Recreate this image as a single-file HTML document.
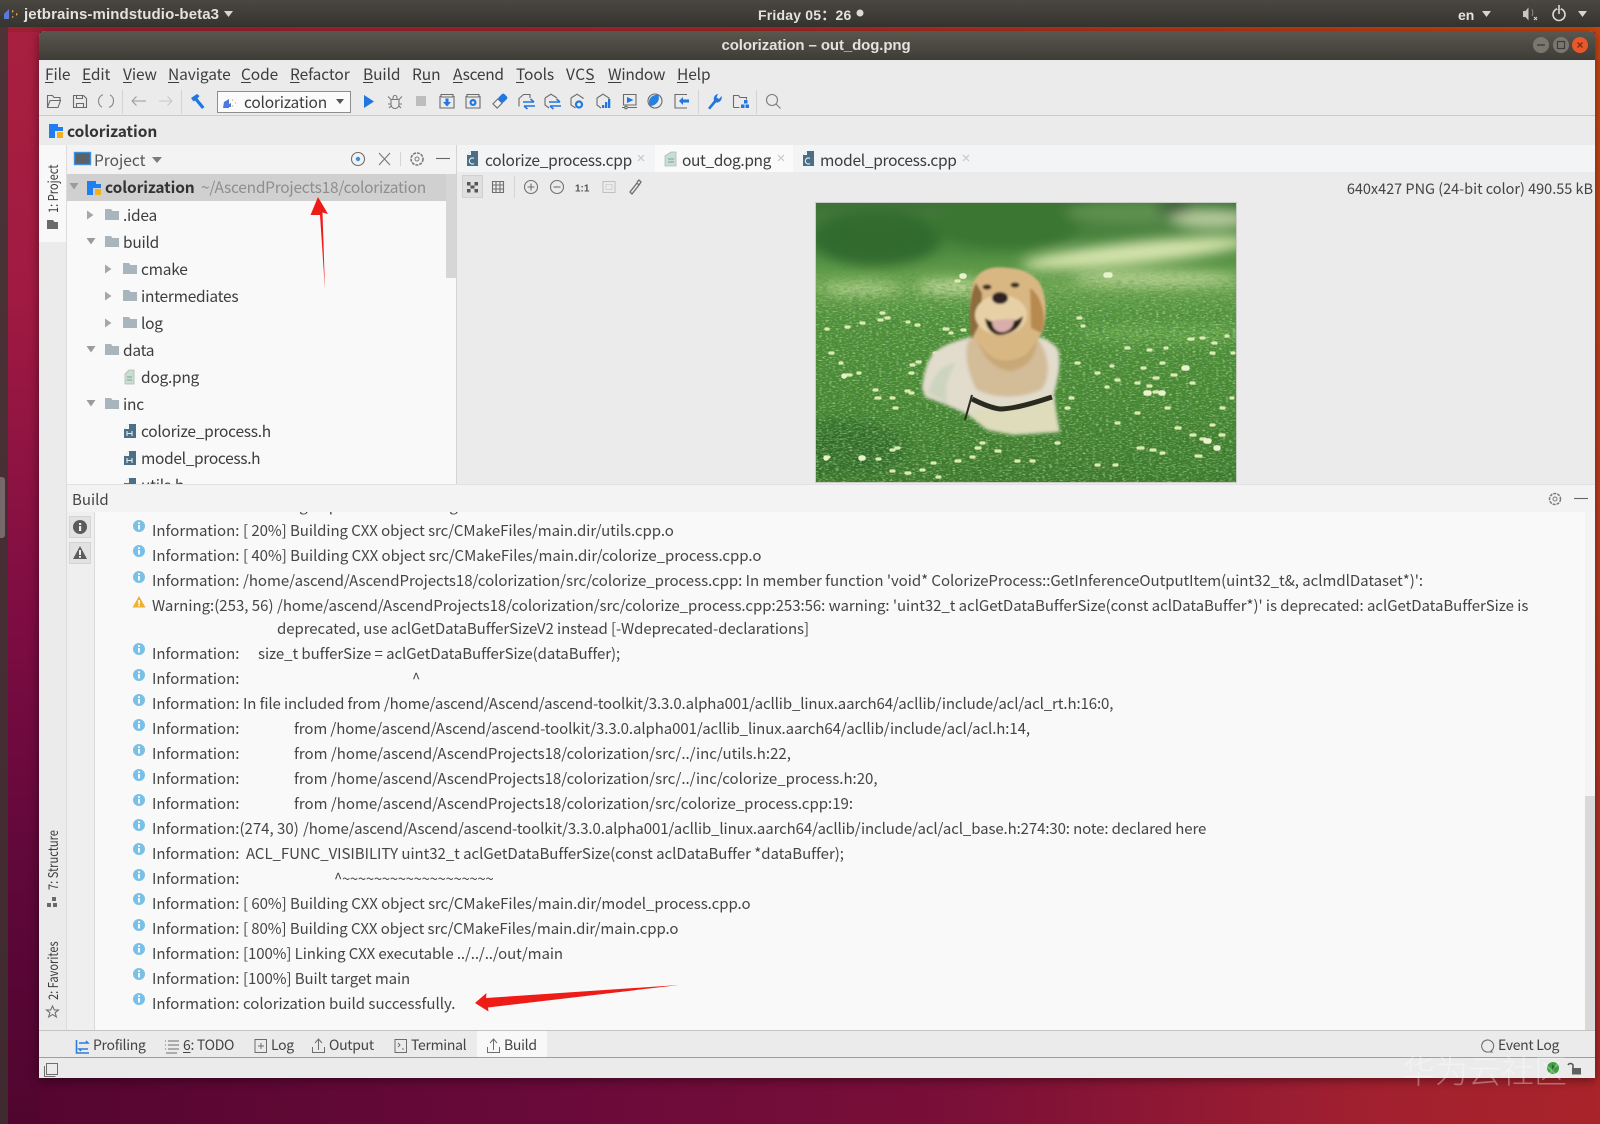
<!DOCTYPE html>
<html lang="en">
<head>
<meta charset="utf-8">
<title>colorization - out_dog.png</title>
<style>
html,body{margin:0;padding:0;width:1600px;height:1124px;overflow:hidden;background:#5a0833}
body{position:relative;font-family:"Noto Sans CJK SC","Liberation Sans",sans-serif;color:#3f3f3f}
.b{position:absolute}
.t{position:absolute;white-space:pre;line-height:20px;height:20px;font-size:15px;color:#3d3d3d}
.u{text-decoration:underline;text-underline-offset:2px;text-decoration-thickness:1px}
.m{font-size:15.5px;top:64px;letter-spacing:-.1px}
.p{font-family:"Liberation Sans",sans-serif;font-weight:700;font-size:15px;color:#e4e2dd;top:5px}
.tr{font-size:15.5px;letter-spacing:-.26px}
.i{font-size:15px;color:#454545}
.v{position:absolute;white-space:pre;transform-origin:0 0;font-size:13.5px;line-height:16px;color:#3d3d3d}
.tb{font-size:14px;color:#444;top:1035px;letter-spacing:-.3px}
svg{position:absolute;left:0;top:0;overflow:visible}
</style>
</head>
<body>
<!-- wallpaper -->
<div class="b" style="left:0;top:0;width:1600px;height:1124px;background:linear-gradient(90deg,#53052f 0%,#6a0a3a 35%,#7a0f38 60%,#a12030 85%,#a9242a 100%)"></div>
<div class="b" style="left:0;top:27px;width:40px;height:1097px;background:linear-gradient(180deg,#a8203f 0%,#a01a42 25%,#7c0c42 55%,#5c0738 80%,#50052e 100%)"></div>
<div class="b" style="left:0;top:27px;width:1600px;height:5px;background:linear-gradient(90deg,#9c1f33 0%,#a5262a 45%,#bc3a14 80%,#c8440f 100%)"></div>
<div class="b" style="left:1595px;top:27px;width:5px;height:1097px;background:linear-gradient(180deg,#c8440f 0%,#bb3a1c 50%,#a9242a 100%)"></div>
<div class="b" style="left:0;top:27px;width:8px;height:1097px;background:linear-gradient(180deg,#4d3338,#3f2a30)"></div>
<div class="b" style="left:0;top:477px;width:5px;height:61px;background:#76686b;border-radius:0 3px 3px 0"></div>
<!-- panel -->
<div class="b" style="left:0;top:0;width:1600px;height:27px;background:linear-gradient(180deg,#4a4741,#36342f)"></div>
<div class="t p" style="left:24px;letter-spacing:.1px">jetbrains-mindstudio-beta3</div>
<div class="t p" style="left:758px;font-size:14px;letter-spacing:.2px">Friday 05：26</div>
<div class="t p" style="left:1458px;font-size:14px">en</div>
<!-- window -->
<div class="b" style="left:39px;top:31px;width:1556px;height:1047px;background:#ebebeb;border-radius:6px 6px 0 0;box-shadow:0 2px 10px rgba(0,0,0,.45)"></div>
<div class="b" style="left:39px;top:31px;width:1556px;height:29px;border-radius:6px 6px 0 0;background:linear-gradient(180deg,#5a574f,#3e3c36)"></div>
<div class="t p" style="left:0;width:1632px;text-align:center;top:36px;letter-spacing:-.1px">colorization – out_dog.png</div>
<!-- menu -->
<div class="b" style="left:39px;top:115px;width:1556px;height:1px;background:#cacaca"></div>
<div class="t m" style="left:45px"><span class="u">F</span>ile</div>
<div class="t m" style="left:82px"><span class="u">E</span>dit</div>
<div class="t m" style="left:123px"><span class="u">V</span>iew</div>
<div class="t m" style="left:168px"><span class="u">N</span>avigate</div>
<div class="t m" style="left:241px"><span class="u">C</span>ode</div>
<div class="t m" style="left:290px"><span class="u">R</span>efactor</div>
<div class="t m" style="left:363px"><span class="u">B</span>uild</div>
<div class="t m" style="left:412px">R<span class="u">u</span>n</div>
<div class="t m" style="left:453px;letter-spacing:-.25px"><span class="u">A</span>scend</div>
<div class="t m" style="left:516px"><span class="u">T</span>ools</div>
<div class="t m" style="left:566px;letter-spacing:.5px">VC<span class="u">S</span></div>
<div class="t m" style="left:608px;letter-spacing:-.25px"><span class="u">W</span>indow</div>
<div class="t m" style="left:677px"><span class="u">H</span>elp</div>
<!-- combo -->
<div class="b" style="left:217px;top:91px;width:132px;height:20px;background:#fbfbfb;border:1px solid #8e8e8e"></div>
<div class="t" style="left:244px;top:92px;font-size:15.5px;letter-spacing:-.2px">colorization</div>
<!-- nav -->
<div class="t" style="left:67px;top:121px;font-size:15.5px;font-weight:700;color:#333;letter-spacing:-.05px">colorization</div>
<!-- sidebar -->
<div class="b" style="left:39px;top:145px;width:27px;height:97px;background:#f8f8f8"></div>
<div class="b" style="left:66px;top:145px;width:1px;height:885px;background:#dcdcdc"></div>
<div class="v" style="left:44px;top:213px;transform:rotate(-90deg) scaleX(.82)">1: Project</div>
<div class="v" style="left:44px;top:890px;transform:rotate(-90deg) scaleX(.82)">7: Structure</div>
<div class="v" style="left:44px;top:1000px;transform:rotate(-90deg) scaleX(.82)">2: Favorites</div>
<!-- project pane -->
<div class="b" style="left:67px;top:145px;width:389px;height:29px;background:#f3f3f3"></div>
<div class="t" style="left:94px;top:150px;font-size:15.5px;color:#555">Project</div>
<div class="b" style="left:67px;top:174px;width:389px;height:310px;background:#f9f9f9;overflow:hidden" id="tree">
  <div class="b" style="left:0;top:0;width:389px;height:27px;background:#d0d0d0"></div>
  <div class="t tr" style="left:38px;top:3px;font-weight:700;color:#333;letter-spacing:-.1px">colorization</div>
  <div class="t tr" style="left:134px;top:3px;color:#8e8e8e">~/AscendProjects18/colorization</div>
  <div class="t tr" style="left:56px;top:31px">.idea</div>
  <div class="t tr" style="left:56px;top:58px">build</div>
  <div class="t tr" style="left:74px;top:85px">cmake</div>
  <div class="t tr" style="left:74px;top:112px">intermediates</div>
  <div class="t tr" style="left:74px;top:139px">log</div>
  <div class="t tr" style="left:56px;top:166px">data</div>
  <div class="t tr" style="left:74px;top:193px">dog.png</div>
  <div class="t tr" style="left:56px;top:220px">inc</div>
  <div class="t tr" style="left:74px;top:247px">colorize_process.h</div>
  <div class="t tr" style="left:74px;top:274px;letter-spacing:-.33px">model_process.h</div>
  <div class="t tr" style="left:74px;top:301px">utils.h</div>
  <div class="b" style="left:379px;top:0;width:10px;height:104px;background:#d6d6d6"></div>
</div>
<div class="b" style="left:456px;top:145px;width:1px;height:339px;background:#d4d4d4"></div>
<!-- tabs -->
<div class="b" style="left:457px;top:145px;width:1138px;height:27px;background:#f2f4f5"></div>
<div class="b" style="left:655px;top:145px;width:138px;height:27px;background:#fafafa"></div>
<div class="t tr" style="left:485px;top:150px">colorize_process.cpp</div>
<div class="t tr" style="left:682px;top:150px;letter-spacing:-.38px">out_dog.png</div>
<div class="t tr" style="left:820px;top:150px;letter-spacing:-.3px">model_process.cpp</div>
<div class="t" style="right:7px;top:179px;font-size:14.5px;color:#444;letter-spacing:-.02px">640x427 PNG (24-bit color) 490.55 kB</div>
<!-- build pane -->
<div class="b" style="left:67px;top:484px;width:1528px;height:28px;background:#f3f3f3;border-top:1px solid #e2e2e2;box-sizing:border-box"></div>
<div class="t" style="left:72px;top:490px;font-size:15px;color:#444">Build</div>
<div class="b" style="left:67px;top:512px;width:28px;height:518px;background:#efefef;border-right:1px solid #dadada;box-sizing:border-box"></div>
<div class="b" style="left:95px;top:512px;width:1490px;height:518px;background:#f9f9f9;overflow:hidden" id="log">
  <div class="t i" style="left:57px;top:-16px">Information: Scanning dependencies of target main</div>
</div>
<div class="b" style="left:1585px;top:512px;width:10px;height:518px;background:#f4f4f4"></div>
<div class="b" style="left:1585px;top:796px;width:10px;height:234px;background:#d9d9d9"></div>

<div class="t i" style="left:152px;top:521px">Information:</div><div class="t i" style="left:243px;top:521px;letter-spacing:-.05px">[ 20%] Building CXX object src/CMakeFiles/main.dir/utils.cpp.o</div>
<div class="t i" style="left:152px;top:546px">Information:</div><div class="t i" style="left:243px;top:546px;letter-spacing:-.03px">[ 40%] Building CXX object src/CMakeFiles/main.dir/colorize_process.cpp.o</div>
<div class="t i" style="left:152px;top:571px">Information:</div><div class="t i" style="left:243px;top:571px;letter-spacing:-.03px">/home/ascend/AscendProjects18/colorization/src/colorize_process.cpp: In member function 'void* ColorizeProcess::GetInferenceOutputItem(uint32_t&amp;, aclmdlDataset*)':</div>
<div class="t i" style="left:152px;top:596px">Warning:(253, 56)</div><div class="t i" style="left:277px;top:596px;letter-spacing:-.04px">/home/ascend/AscendProjects18/colorization/src/colorize_process.cpp:253:56: warning: 'uint32_t aclGetDataBufferSize(const aclDataBuffer*)' is deprecated: aclGetDataBufferSize is</div>
<div class="t i" style="left:277px;top:619px;letter-spacing:-.07px">deprecated, use aclGetDataBufferSizeV2 instead [-Wdeprecated-declarations]</div>
<div class="t i" style="left:152px;top:644px">Information:</div><div class="t i" style="left:258px;top:644px;letter-spacing:-.06px">size_t bufferSize = aclGetDataBufferSize(dataBuffer);</div>
<div class="t i" style="left:152px;top:669px">Information:</div><div class="t i" style="left:412px;top:669px">^</div>
<div class="t i" style="left:152px;top:694px">Information:</div><div class="t i" style="left:243px;top:694px;letter-spacing:-.11px">In file included from /home/ascend/Ascend/ascend-toolkit/3.3.0.alpha001/acllib_linux.aarch64/acllib/include/acl/acl_rt.h:16:0,</div>
<div class="t i" style="left:152px;top:719px">Information:</div><div class="t i" style="left:294px;top:719px;letter-spacing:-.09px">from /home/ascend/Ascend/ascend-toolkit/3.3.0.alpha001/acllib_linux.aarch64/acllib/include/acl/acl.h:14,</div>
<div class="t i" style="left:152px;top:744px">Information:</div><div class="t i" style="left:294px;top:744px">from /home/ascend/AscendProjects18/colorization/src/../inc/utils.h:22,</div>
<div class="t i" style="left:152px;top:769px">Information:</div><div class="t i" style="left:294px;top:769px">from /home/ascend/AscendProjects18/colorization/src/../inc/colorize_process.h:20,</div>
<div class="t i" style="left:152px;top:794px">Information:</div><div class="t i" style="left:294px;top:794px">from /home/ascend/AscendProjects18/colorization/src/colorize_process.cpp:19:</div>
<div class="t i" style="left:152px;top:819px">Information:(274, 30)</div><div class="t i" style="left:303px;top:819px;letter-spacing:-.11px">/home/ascend/Ascend/ascend-toolkit/3.3.0.alpha001/acllib_linux.aarch64/acllib/include/acl/acl_base.h:274:30: note: declared here</div>
<div class="t i" style="left:152px;top:844px">Information:</div><div class="t i" style="left:246px;top:844px;letter-spacing:-.04px">ACL_FUNC_VISIBILITY uint32_t aclGetDataBufferSize(const aclDataBuffer *dataBuffer);</div>
<div class="t i" style="left:152px;top:869px">Information:</div><div class="t i" style="left:334px;top:869px;letter-spacing:-.36px">^~~~~~~~~~~~~~~~~~~~</div>
<div class="t i" style="left:152px;top:894px">Information:</div><div class="t i" style="left:243px;top:894px;letter-spacing:-.05px">[ 60%] Building CXX object src/CMakeFiles/main.dir/model_process.cpp.o</div>
<div class="t i" style="left:152px;top:919px">Information:</div><div class="t i" style="left:243px;top:919px;letter-spacing:-.07px">[ 80%] Building CXX object src/CMakeFiles/main.dir/main.cpp.o</div>
<div class="t i" style="left:152px;top:944px">Information:</div><div class="t i" style="left:243px;top:944px;letter-spacing:-.09px">[100%] Linking CXX executable ../../../out/main</div>
<div class="t i" style="left:152px;top:969px">Information:</div><div class="t i" style="left:243px;top:969px;letter-spacing:-.08px">[100%] Built target main</div>
<div class="t i" style="left:152px;top:994px">Information:</div><div class="t i" style="left:243px;top:994px">colorization build successfully.</div>

<!-- bottom bars -->
<div class="b" style="left:39px;top:1030px;width:1556px;height:1px;background:#c4c4c4"></div>
<div class="b" style="left:39px;top:1057px;width:1556px;height:1px;background:#9f9f9f"></div>
<div class="b" style="left:477px;top:1031px;width:70px;height:26px;background:#f8f8f8"></div>
<div class="t tb" style="left:93px">Profiling</div>
<div class="t tb" style="left:183px"><span class="u">6</span>: TODO</div>
<div class="t tb" style="left:271px">Log</div>
<div class="t tb" style="left:329px">Output</div>
<div class="t tb" style="left:411px">Terminal</div>
<div class="t tb" style="left:504px">Build</div>
<div class="t tb" style="left:1498px">Event Log</div>

<!-- image -->
<div class="b" style="left:815px;top:202px;width:422px;height:281px;background:#c9cdc5"></div>
<svg style="left:816px;top:203px;overflow:hidden" width="420" height="279" viewBox="0 0 420 279">
  <defs>
    <linearGradient id="gr" x1="0" y1="0" x2="0" y2="1">
      <stop offset="0" stop-color="#3f7238"/><stop offset=".17" stop-color="#4d8a40"/>
      <stop offset=".3" stop-color="#70a852"/><stop offset=".42" stop-color="#4f9238"/>
      <stop offset=".7" stop-color="#44882f"/><stop offset="1" stop-color="#397528"/>
    </linearGradient>
    <filter id="b8" x="-30%" y="-30%" width="160%" height="160%"><feGaussianBlur stdDeviation="6"/></filter>
    <filter id="b2" x="-20%" y="-20%" width="140%" height="140%"><feGaussianBlur stdDeviation="1.600"/></filter>
    <filter id="b1" x="-20%" y="-20%" width="140%" height="140%"><feGaussianBlur stdDeviation="1"/></filter>
    <filter id="n" x="0" y="0" width="100%" height="100%"><feTurbulence type="fractalNoise" baseFrequency=".16 .5" numOctaves="3" seed="4"/><feColorMatrix values="0 0 0 0 .08  0 0 0 0 .24  0 0 0 0 .06  2.400 0 0 0 -.95"/></filter>
    <filter id="n2" x="0" y="0" width="100%" height="100%"><feTurbulence type="fractalNoise" baseFrequency=".3 .7" numOctaves="2" seed="11"/><feColorMatrix values="0 0 0 0 .6  0 0 0 0 .85  0 0 0 0 .42  0 1.800 0 0 -.9"/></filter>
    <linearGradient id="fd" x1="0" y1="0" x2="0" y2="1"><stop offset=".22" stop-color="#000"/><stop offset=".4" stop-color="#fff"/></linearGradient>
    <mask id="mk"><rect width="420" height="279" fill="url(#fd)"/></mask>
  </defs>
  <rect width="420" height="279" fill="url(#gr)"/>
  <g filter="url(#b8)">
    <ellipse cx="60" cy="35" rx="65" ry="28" fill="#336a2e"/>
    <ellipse cx="190" cy="22" rx="75" ry="24" fill="#3a7632"/>
    <ellipse cx="320" cy="10" rx="70" ry="12" fill="#5d9050"/>
    <ellipse cx="395" cy="16" rx="40" ry="10" fill="#b4c99a"/>
    <ellipse cx="358" cy="6" rx="18" ry="5" fill="#3b4e3a"/>
    <ellipse cx="320" cy="50" rx="115" ry="11" fill="#d5e4ac" transform="rotate(-6 320 50)"/>
    <ellipse cx="340" cy="76" rx="85" ry="7" fill="#bcd596"/>
    <ellipse cx="45" cy="86" rx="40" ry="6" fill="#b3d08c"/>
    <ellipse cx="135" cy="84" rx="34" ry="7" fill="#c2d99a"/>
    <ellipse cx="350" cy="130" rx="90" ry="10" fill="#68a848"/>
    <ellipse cx="30" cy="245" rx="60" ry="28" fill="#2f6a26"/>
    <ellipse cx="370" cy="255" rx="60" ry="20" fill="#3a7c2c"/>
  </g>
  <g mask="url(#mk)"><rect width="420" height="279" filter="url(#n)"/><rect width="420" height="279" filter="url(#n2)"/></g>
  <g fill="none" stroke-linecap="round">
    <path stroke="#dcebb2" stroke-width="3.200" d="M63 117h3M70 115h3M91 119h2M30 124h3M10 126h2M100 122h3M128 126h4M134 130h2M146 127h3M31 172h4M42 170h2M95 162h3M101 159h3M94 170h3M60 195h4M58 187h3M90 188h3M94 190h3M75 195h3M78 205h3M185 192h2M332 147h3M349 145h2M373 136h4M385 135h3M397 140h3M410 133h2M262 115h3M266 123h2M310 145h3M345 160h3M395 150h3M416 150h2M326 165h3M338 175h4M320 180h3M356 172h4M375 180h3M338 189h4M332 183h3M415 195h2M280 170h3M260 160h3M295 163h2M290 184h2M300 177h3M254 195h3M322 245h5M335 247h4M345 250h3M375 232h4M385 236h4M380 253h5M404 232h4M280 262h3M298 262h3M165 240h3M180 248h4M155 254h3M140 258h4M75 247h3M61 256h3M75 268h3M90 270h4M105 267h3M116 260h3M121 274h3M80 245h3M10 254h3M140 78h3M65 110h3M45 120h3M14 150h3M24 160h2M118 150h3M160 245h4M200 258h3M215 258h3M240 240h3M250 205h3M300 220h3M320 210h3M350 205h3M360 225h4M395 222h3M405 205h3"/>
    <path stroke="#e8f2cc" stroke-width="5.500" d="M45 255h2M10 255h.1M290 72h4M146 73h2M28 173h.1M330 190h3M368 165h3M390 238h3M400 245h2M345 190h2"/>
  </g>
  <!-- dog -->
  <g filter="url(#b2)">
    <path d="M106 184C108 168 112 158 116 152C122 145 132 140 154 134L224 134C236 138 244 146 243 151C245 165 241 180 238 191C240 205 241 215 244 229L198 232L171 227L151 211L128 201L109 194Z" fill="#e2dccd"/>
    <path d="M153 136L222 136C232 150 236 172 226 186C212 194 180 198 160 186C152 170 147 150 153 136Z" fill="#d3bc98"/>
    <path d="M162 134C180 130 205 130 220 134C222 150 214 165 194 168C176 166 164 150 162 134Z" fill="#c9a877"/>
    <path d="M112 190C118 170 126 162 140 160C130 175 128 190 132 200Z" fill="#ccd4bf"/>
    <path d="M152 208L238 196L243 229L198 232L171 227Z" fill="#dedcbb"/>
  </g>
  <g filter="url(#b1)">
    <path d="M158 78C165 66 175 63 193 65C210 66 222 74 226 85C232 100 230 120 226 130L212 150C195 162 175 160 165 142L155 135C157 120 150 100 158 78Z" fill="#d8b783"/>
    <path d="M160 80C152 92 153 125 156 136L165 118L166 90Z" fill="#8e6c3e"/>
    <path d="M214 85C226 92 232 118 225 130L215 125Z" fill="#b98a50"/>
    <ellipse cx="185" cy="112" rx="26" ry="20" fill="#e8d0a6"/>
    <ellipse cx="171" cy="84" rx="4.500" ry="2.600" fill="#3d2a1a"/>
    <ellipse cx="199" cy="82" rx="4.500" ry="2.600" fill="#3d2a1a"/>
    <ellipse cx="184" cy="95" rx="8" ry="6" fill="#2e2420"/>
    <path d="M169 115C178 122 196 122 207 113C205 127 192 132 182 132C174 130 170 124 169 115Z" fill="#2a1d18"/>
    <path d="M176 118C182 116 192 116 198 116C198 126 190 130 184 129C179 128 176 124 176 118Z" fill="#d9aeaa"/>
  </g>
  <path d="M156 196C168 202 176 205 184 206C196 206 212 202 236 194" fill="none" stroke="#2b2a20" stroke-width="5"/>
  <path d="M156 192L149 217" fill="none" stroke="#2b2a20" stroke-width="2"/>
</svg>

<!-- icons & annotations overlay -->
<svg width="1600" height="1124" viewBox="0 0 1600 1124" style="pointer-events:none">
  <defs>
    <g id="inf"><circle r="6" fill="#7ac0e6"/><rect x="-1" y="-1" width="2" height="4.500" fill="#f4fbff"/><rect x="-1" y="-3.800" width="2" height="1.800" fill="#f4fbff"/></g>
    <path id="fold" d="M0 1h6l1.500 2H14v9H0z" fill="#a9b5bd"/>
    <path id="ar" d="M0-4.500L6.500 0 0 4.500z" fill="#a7a7a7"/>
    <path id="ad" d="M-4.500-3H4.500L0 3.500z" fill="#9b9b9b"/>
    <g id="hf"><path d="M5 0h7v14H0V5z" fill="#4a6f87"/><path d="M3 7v5M8 7v5M3 9.500h5" stroke="#e6eef2" stroke-width="1.100"/><path d="M0 5L5 0v5z" fill="#f9f9f9"/></g>
    <g id="cf"><path d="M4 0h7v15H0V4z" fill="#4a6f87"/><path d="M0 4L4 0v4z" fill="#f4f5f6"/><path d="M7 7.500a3 3 0 1 0 0 5" fill="none" stroke="#dbe9ee" stroke-width="1.200"/></g>
    <g id="pjt"><path d="M0 0h9v3h5v4H6v7H0z" fill="#1f7ff0"/><rect x="8" y="8" width="6" height="6" fill="#f2b01e"/></g>
  </defs>

  <!-- panel icons -->
  <g>
    <path d="M4 14l5-5v10H4z" fill="#5c79d8"/><path d="M12 10l2 1-2 2zM16 13l2 1-2 2zM12 16l2 1-2 1z" fill="#e0a440"/>
    <path d="M224 11h9l-4.500 6z" fill="#d8d6d1"/><circle cx="860" cy="13" r="3.500" fill="#dcdad6"/>
    <path d="M1482 11h9l-4.500 6z" fill="#d8d6d1"/>
    <path d="M1523 11h2.500l3-3.500v13l-3-3.500h-2.500z" fill="#c9c7c2"/><path d="M1532 9c1 2.500 1 5 0 7" stroke="#8b8983" fill="none"/><path d="M1534 17l3 3m0-3l-3 3" stroke="#d8d6d1"/>
    <circle cx="1559" cy="14.500" r="6" fill="none" stroke="#dad8d3" stroke-width="1.600"/><rect x="1557" y="6" width="4" height="3" fill="#45423c"/><path d="M1559 5v9" stroke="#dad8d3" stroke-width="1.600"/>
    <path d="M1578 11h9l-4.500 6z" fill="#d8d6d1"/>
  </g>
  <!-- title buttons -->
  <circle cx="1541" cy="45" r="8" fill="#7a776f"/><path d="M1537 45h8" stroke="#3f3d38" stroke-width="1.400"/>
  <circle cx="1561" cy="45" r="8" fill="#7a776f"/><rect x="1557.500" y="41.500" width="7" height="7" fill="none" stroke="#3f3d38" stroke-width="1.200"/>
  <circle cx="1580" cy="45" r="8" fill="#e8582a"/><path d="M1577.500 42.500l5 5m0-5l-5 5" stroke="#7d2b12" stroke-width="1.300"/>

  <!-- main toolbar -->
  <g fill="none" stroke="#6b6b6b" stroke-width="1.100">
    <path d="M47.500 107.500V95.500h5l1.500 2h6v3M47.500 107.500h10.500l2.500-7H50z"/>
    <path d="M73.500 95.500h10l3 3v9h-13zM76.500 107.500v-4h7v4M76.500 95.500v3h6v-3"/>
    <path d="M103 94.600a7 7 0 0 0-1 12.600M109 107.400a7 7 0 0 0 1-12.600" stroke="#868686"/>
    <path d="M132 101h14M132 101l4.500-4.500M132 101l4.500 4.500" stroke="#9a9a9a"/>
    <path d="M159 101h13M172 101l-4.500-4.500M172 101l-4.500 4.500" stroke="#c8c8c8"/>
    <path d="M122.500 90v24M181.500 90v24M698.500 90v24M756.500 90v24" stroke="#d4d4d4"/>
    <path d="M391 99.500h8v5a4 4 0 0 1-8 0zM393 99.500v-2a2 2 0 0 1 4 0v2M388 96.500l3 3M402 96.500l-3 3M388 104h3M399 104h3M389 108l2-2M401 108l-2-2" stroke="#7a7a7a"/>
    <path d="M441 94.500h12v2h1v11.500h-14V96.500h1zM441 97h12"/>
    <path d="M467 94.500h12v2h1v11.500h-14V96.500h1zM467 97h12"/>
    <path d="M519 106.500V98.500L523.500 94.500H530v3.500"/>
    <path d="M545 98l6-3.800 6 3.800M545 98v7l4 3"/>
    <path d="M571 98l6-3.800 6 3.800v1M571 98v7l4.500 3"/>
    <path d="M597 98l6-3.800 6 3.800v1M597 98v7l4 3"/>
    <path d="M623.500 94.500h12.500v10.500h-12.500zM622 107.500h2.500M628 107.500h9"/>
    <circle cx="626" cy="107.500" r="1.300"/>
    <circle cx="655" cy="101" r="7"/>
    <path d="M687 94.500h-12v13.500h12"/>
    <path d="M733.500 107.500V95.500h5l1.500 2h6.500v2M733.500 107.500h6"/>
    <circle cx="772" cy="100" r="5.500" stroke="#7a7a7a"/><path d="M776 104l4.500 4.500" stroke="#7a7a7a"/>
  </g>
  <g fill="#2176e0">
    <path d="M191 98L197 94L199.500 96L197.500 98.500L204.500 107L202 109L195 100.500L193.500 101.500Z"/>
    <path d="M224 102l5-3v9h-6zM229 104l2-1v4h-2z" fill="#4c7ae0"/><path d="M232 99l1.500 1-1.500 1zM235 102l1.500 1-1.500 1zM232 105l1.500 1-1.500 1z" fill="#e2b56c"/>
    <path d="M364 95l10 6.500-10 6.500z"/>
    <rect x="416" y="96" width="10" height="10" fill="#bdbdbd"/>
    <path d="M445.500 98.500h3v3.500h2.500l-4 4.500-4-4.500h2.500z"/>
    <circle cx="473" cy="102.500" r="3.500"/><circle cx="473" cy="102.500" r="1.300" fill="#eee"/>
    <g transform="rotate(-45 500 101)"><rect x="493" y="98" width="7" height="6" fill="#f2f2f2" stroke="#6b6b6b" stroke-width="1.100"/><rect x="500" y="97.500" width="8" height="7" rx="2"/></g>
    <path d="M523 102h11M534 102l-3.500-3M535 106h-11M524 106l3.500 3" stroke="#2176e0" stroke-width="1.600" fill="none"/>
    <path d="M549 102h11M560 102l-3.500-3M561 106h-11M550 106l3.500 3" stroke="#2176e0" stroke-width="1.600" fill="none"/>
    <circle cx="579" cy="104.500" r="3" fill="none" stroke="#2176e0" stroke-width="2.200"/>
    <rect x="602" y="105" width="2.300" height="3"/><rect x="605" y="102" width="2.300" height="6"/><rect x="608" y="99" width="2.300" height="9"/>
    <path d="M627 97l6.500 3-6.500 3z"/>
    <path d="M650 106C647 100 651 95 658 94.500C661 100 656 106 650 106Z" fill="#2680e2"/>
    <path d="M679 101l4-4v2.500h6v3h-6v2.500z"/>
    <path d="M708 108l6-7.500a5 5 0 0 1 4-6.500l-1.500 3.500 2.500 1.500 2.500-3a5 5 0 0 1-5.500 6.500l-6 7z"/>
    <rect x="744" y="100" width="3.500" height="3.500"/><rect x="741" y="104.500" width="3.500" height="3.500"/><rect x="745.500" y="104.500" width="3.500" height="3.500"/>
  </g>
  <path d="M336 99h8l-4 5z" fill="#555"/>
  <use href="#pjt" x="49" y="124"/>

  <!-- project header -->
  <rect x="74.500" y="152.500" width="16" height="12" fill="#5b6168" stroke="#3d8fdc" stroke-width="1.400"/>
  <path d="M152 157h10l-5 6z" fill="#7c7c7c"/>
  <circle cx="358" cy="159" r="6.500" fill="none" stroke="#6d6d6d" stroke-width="1.100"/><circle cx="358" cy="159" r="2.200" fill="#3a8fe0"/>
  <path d="M379 153l11 12M390 153l-11 12" stroke="#777" stroke-width="1.100"/>
  <path d="M400.500 152v14" stroke="#d4d4d4"/>
  <circle cx="417" cy="159" r="6" fill="none" stroke="#7a7a7a" stroke-width="1.600" stroke-dasharray="3 1"/><circle cx="417" cy="159" r="2" fill="none" stroke="#7a7a7a"/>
  <path d="M436 158.500h14" stroke="#666" stroke-width="1.100"/>

  <!-- sidebar icons -->
  <path d="M47 220h6l1.500 2H58v7H47z" fill="#6a6a6a"/>
  <path d="M47 903h4v4h-4zM53 903h4v4h-4zM52 897h4v4h-4z" fill="#6a6a6a"/>
  <path d="M52.500 1006l1.800 4h4.200l-3.400 2.700 1.300 4.300-3.900-2.500-3.900 2.500 1.300-4.300-3.400-2.700h4.200z" fill="none" stroke="#6a6a6a"/>

  <!-- tree icons -->
  <use href="#ad" x="74" y="186"/>
  <use href="#pjt" x="87" y="181"/>
  <use href="#ar" x="87" y="215"/><use href="#fold" x="105" y="208"/>
  <use href="#ad" x="91" y="241"/><use href="#fold" x="105" y="235"/>
  <use href="#ar" x="105" y="269"/><use href="#fold" x="123" y="262"/>
  <use href="#ar" x="105" y="296"/><use href="#fold" x="123" y="289"/>
  <use href="#ar" x="105" y="323"/><use href="#fold" x="123" y="316"/>
  <use href="#ad" x="91" y="349"/><use href="#fold" x="105" y="343"/>
  <path d="M129 370h5v14h-9v-10z" fill="#cbdcd2" stroke="#a8bfae" stroke-width=".8"/><path d="M127 377h5M127 380h5" stroke="#6fa98f"/>
  <use href="#ad" x="91" y="403"/><use href="#fold" x="105" y="397"/>
  <use href="#hf" x="124" y="424"/>
  <use href="#hf" x="124" y="451"/>
  <clipPath id="cl"><rect x="66" y="174" width="390" height="310"/></clipPath>
  <g clip-path="url(#cl)"><use href="#hf" x="124" y="478"/></g>

  <!-- tab icons / closes -->
  <use href="#cf" x="467" y="151"/><use href="#cf" x="803" y="151"/>
  <path d="M671 152h5v14h-11v-10z" fill="#cbdcd2" stroke="#a8bfae" stroke-width=".8"/><path d="M668 159h6M668 162h6" stroke="#6fa98f"/>
  <path d="M638 155l6 6m0-6l-6 6M778 155l6 6m0-6l-6 6M963 155l6 6m0-6l-6 6" stroke="#c3c6c8" stroke-width="1.200"/>

  <!-- image toolbar -->
  <rect x="462.500" y="175.500" width="20" height="22" fill="#dfdfdf" stroke="#d0d0d0"/>
  <path d="M467 182h3.500v3.500H467zM474.500 182h3.500v3.500h-3.500zM470.500 185.500h4v3h-4zM467 189h3.500v3.500H467zM474.500 189h3.500v3.500h-3.500z" fill="#555"/>
  <g fill="none" stroke="#6f6f6f" stroke-width="1.100">
    <path d="M492.500 181.500h11v11h-11zM496 181.500v11M500 181.500v11M492.500 185h11M492.500 189h11"/>
    <circle cx="531" cy="187" r="6.500"/><path d="M527.500 187h7M531 183.500v7"/>
    <circle cx="557" cy="187" r="6.500"/><path d="M553.500 187h7"/>
    <path d="M603 181.500h12v11h-12z" stroke="#c0c0c0"/><path d="M606 189.500h6v-5h-6z" stroke="#d2d2d2"/>
    <path d="M631 193l-1-1 7-9 2 2-7 9zM637 182l2-2 2 2-2 3" stroke-width="1.300"/>
  </g>
  <path d="M514.500 176v22" stroke="#d4d4d4"/>
  <text x="575" y="191.500" font-family="Liberation Sans,sans-serif" font-size="10" font-weight="700" fill="#555">1:1</text>

  <!-- build pane icons -->
  <circle cx="1555" cy="499" r="5.500" fill="none" stroke="#7a7a7a" stroke-width="1.500" stroke-dasharray="3 1"/><circle cx="1555" cy="499" r="2" fill="none" stroke="#7a7a7a"/>
  <path d="M1574 498.500h14" stroke="#666" stroke-width="1.100"/>
  <rect x="69.500" y="516.500" width="21" height="21" fill="#e2e2e2" stroke="#d4d4d4"/>
  <rect x="69.500" y="542.500" width="21" height="21" fill="#e2e2e2" stroke="#d4d4d4"/>
  <circle cx="80" cy="527" r="7" fill="#5c5c5c"/><rect x="79" y="526" width="2.200" height="5" fill="#eee"/><rect x="79" y="523" width="2.200" height="2" fill="#eee"/>
  <path d="M80 546l7 13H73z" fill="#5c5c5c"/><rect x="79" y="550" width="2" height="5" fill="#eee"/><rect x="79" y="556" width="2" height="1.800" fill="#eee"/>
  <!-- log icons -->
  <use href="#inf" x="139" y="526"/><use href="#inf" x="139" y="551"/><use href="#inf" x="139" y="577"/>
  <path d="M139 596l6.500 11.500h-13z" fill="#efb02f"/><rect x="138.200" y="600" width="1.700" height="4" fill="#fff"/><rect x="138.200" y="604.700" width="1.700" height="1.500" fill="#fff"/>
  <use href="#inf" x="139" y="649"/><use href="#inf" x="139" y="675"/><use href="#inf" x="139" y="700"/><use href="#inf" x="139" y="725"/><use href="#inf" x="139" y="750"/><use href="#inf" x="139" y="775"/><use href="#inf" x="139" y="800"/><use href="#inf" x="139" y="825"/><use href="#inf" x="139" y="849"/><use href="#inf" x="139" y="875"/><use href="#inf" x="139" y="899"/><use href="#inf" x="139" y="925"/><use href="#inf" x="139" y="949"/><use href="#inf" x="139" y="974"/><use href="#inf" x="139" y="999"/>

  <!-- bottom tool icons -->
  <path d="M76.500 1040v13h12.500" fill="none" stroke="#2b7ee0" stroke-width="1.600"/>
  <path d="M79 1043h9l-2-2M88 1049h-9l2 2" fill="none" stroke="#2b7ee0" stroke-width="1.500"/>
  <g fill="none" stroke="#6e6e6e" stroke-width="1">
    <path d="M168 1041h11M168 1045h11M168 1049h11M166 1053h11M165 1041h1M165 1045h1M165 1049h1"/>
    <path d="M255 1039.500h11.500v13H255zM258 1046h6M261 1043v6"/>
    <path d="M318.500 1040v10M315 1043l3.500-4 3.500 4M312.500 1047v5.500h12v-5.500"/>
    <path d="M395 1039.500h11.500v13H395zM398 1043l2 2-2 2M402 1049h2"/>
    <path d="M493.500 1040v10M490 1043l3.500-4 3.500 4M487.500 1047v5.500h12v-5.500"/>
    <path d="M1491 1051a6 6 0 1 0-3 1h4z" stroke-width="1.100"/>
    <rect x="46.500" y="1063.500" width="11" height="11"/><path d="M44.500 1066v10.500h11"/>
  </g>
  <circle cx="1553" cy="1068" r="6" fill="#3ea23e"/><path d="M1552 1064.500l4.500 3.500-4.500 3.500z" fill="#236e25"/>
  <path d="M1573 1068v-3a2.800 2.800 0 0 0-5 0" fill="none" stroke="#555" stroke-width="1.500"/><rect x="1572" y="1068" width="9" height="6.500" fill="#606060"/>

  <!-- red arrows -->
  <path d="M318 197L328 214L322.500 212.500L325 290L320 215L310.500 215Z" fill="#ee1c17"/>
  <path d="M475 1003L486.500 993L486 998L679 985L488 1007.500L488.500 1011.500Z" fill="#ee1c17"/>
</svg>

<!-- watermark -->
<div class="b" style="left:1402px;top:1049px;font-size:33px;line-height:40px;white-space:pre;color:rgba(255,255,255,.34);font-family:'Noto Sans CJK SC','WenQuanYi Zen Hei',sans-serif;font-weight:300">华为云社区</div>
</body>
</html>
